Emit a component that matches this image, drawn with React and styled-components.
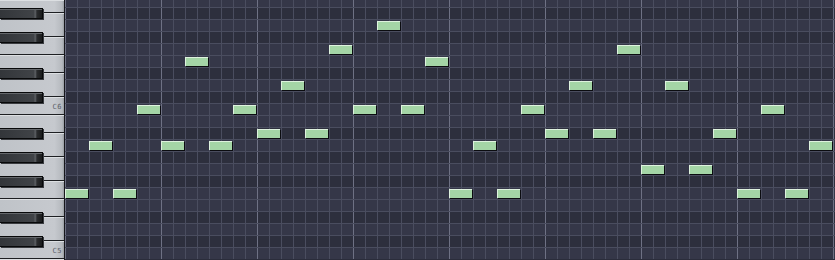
import React from "react";
import styled, { createGlobalStyle } from "styled-components";

const GlobalStyle = createGlobalStyle`
  body {
    margin: 0;
    background: #2b2d3b;
    font-family: "DejaVu Sans", sans-serif;
  }
`;

const ROW_H = 12;
const ROWS = 22;
const BLACK_ROWS = [1, 3, 6, 8, 11, 13, 15, 18, 20];
// row index for each 2-step note, left to right
const NOTES = [
  16, 12, 16, 9, 12, 5, 12, 9, 11, 7, 11, 4, 9, 2, 9, 5,
  16, 12, 16, 9, 11, 7, 11, 4, 14, 7, 14, 11, 16, 9, 16, 12,
];
// white keys from top: height and optional label
const WHITE_KEYS = [
  { h: 13 }, { h: 24 }, { h: 18 }, { h: 18 }, { h: 24 }, { h: 18, label: "C6" },
  { h: 18 }, { h: 24 }, { h: 24 }, { h: 18 }, { h: 18 }, { h: 24 }, { h: 18, label: "C5" },
  { h: 18 },
];

const Roll = styled.div`
  display: flex;
  width: 835px;
  height: 260px;
  overflow: hidden;
`;

const Keyboard = styled.div`
  position: relative;
  flex: 0 0 64px;
  display: flex;
  flex-direction: column;
  border-right: 1px solid #17181c;
  background: #1b1c20;
  overflow: hidden;
`;

const WhiteKey = styled.div`
  flex: 0 0 ${(p) => p.$h}px;
  box-sizing: border-box;
  display: flex;
  align-items: flex-end;
  justify-content: flex-end;
  padding: 0 2px 3px 0;
  background: linear-gradient(to right, #bfc3c8 0%, #c6c9ce 85%, #b5b9be 97%, #979ba0 100%);
  border-bottom: 1px solid #1d1f22;
  box-shadow: inset 0 1px 0 #dcdfe2;
`;

const KeyLabel = styled.span`
  font-family: "DejaVu Sans Mono", "Liberation Mono", monospace;
  font-size: 7px;
  line-height: 7px;
  color: #5b5f67;
  letter-spacing: 0.5px;
`;

const BlackKey = styled.div`
  position: absolute;
  left: 0;
  width: 43px;
  height: 11px;
  box-sizing: border-box;
  border: 1px solid #08090a;
  border-left: none;
  background: linear-gradient(
    to right,
    #33363a 0%,
    #404347 80%,
    #5c5f63 84%,
    #2a2c2e 88%,
    #1a1b1c 100%
  );
  box-shadow: inset 0 1px 0 #64676b, 1px 1px 0 #3a3c40;
`;

const Grid = styled.div`
  flex: 1;
  display: flex;
  flex-direction: column;
  overflow: hidden;
`;

const Rows = styled.div`
  display: flex;
  flex-direction: column;
  margin-top: -5px;
`;

const Row = styled.div`
  flex: 0 0 ${ROW_H}px;
  box-sizing: border-box;
  display: grid;
  grid-template-columns: repeat(65, 12px);
  align-items: start;
  border-top: 1px solid #4a4d5f;
  background-color: ${(p) => (p.$black ? "#2d2f3d" : "#353748")};
  background-image:
    linear-gradient(to right, #6e7184 1px, transparent 1px),
    linear-gradient(to right, #4a4d5f 1px, transparent 1px);
  background-size: 96px 100%, 12px 100%;
`;

const Note = styled.div`
  grid-column: ${(p) => p.$col} / span 2;
  margin-top: 1px;
  width: 23px;
  height: 9px;
  background: #a4d5a6;
  box-shadow: inset 1px 1px 0 #def2de, 1px 1px 0 #0b0c10;
`;

export default function App() {
  return (
    <>
      <GlobalStyle />
      <Roll>
        <Keyboard>
          {WHITE_KEYS.map((k, i) => (
            <WhiteKey key={i} $h={k.h}>
              {k.label && <KeyLabel>{k.label}</KeyLabel>}
            </WhiteKey>
          ))}
          {BLACK_ROWS.map((r) => (
            <BlackKey key={r} style={{ top: r * ROW_H - 5 + 1 }} />
          ))}
        </Keyboard>
        <Grid>
          <Rows>
            {Array.from({ length: ROWS }, (_, r) => (
              <Row key={r} $black={BLACK_ROWS.includes(r)}>
                {NOTES.map((n, i) =>
                  n === r ? <Note key={i} $col={i * 2 + 1} /> : null
                )}
              </Row>
            ))}
          </Rows>
        </Grid>
      </Roll>
    </>
  );
}
